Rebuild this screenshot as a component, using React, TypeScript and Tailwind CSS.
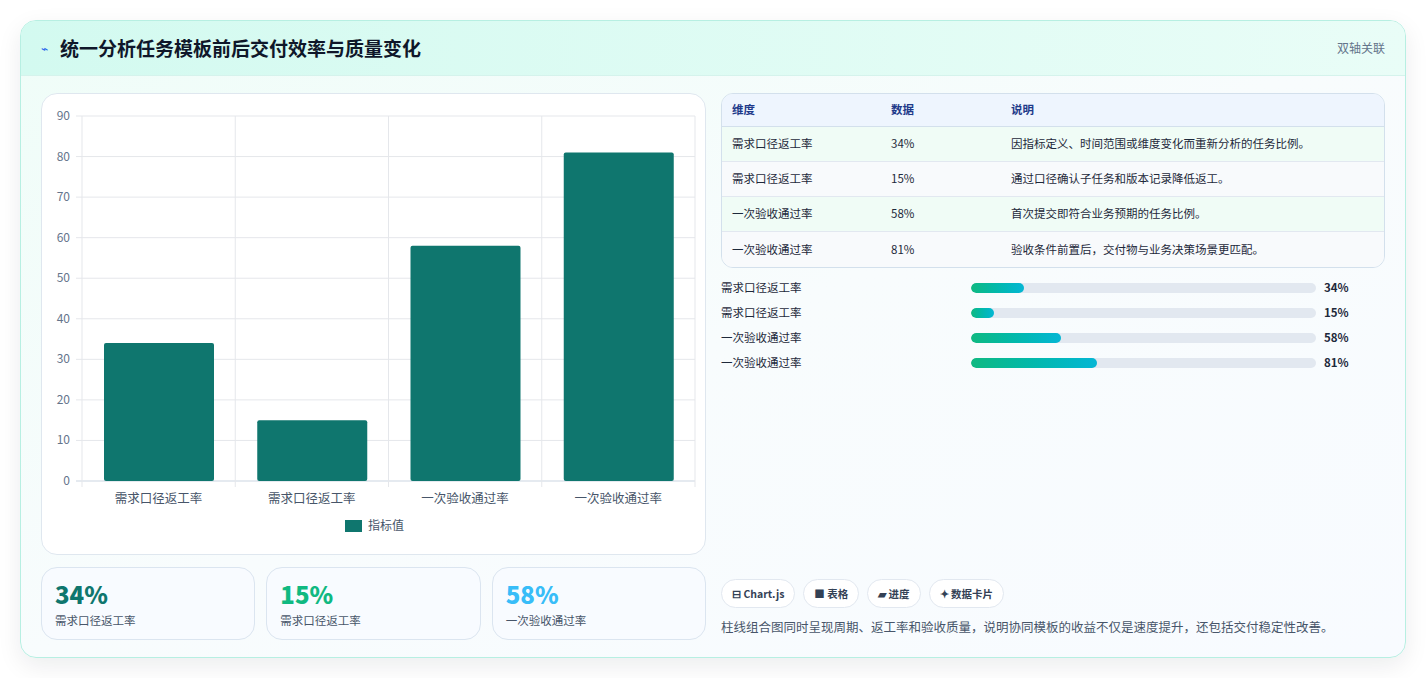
import React from "react";

const rows = [
  { name: "需求口径返工率", v: 34, note: "因指标定义、时间范围或维度变化而重新分析的任务比例。" },
  { name: "需求口径返工率", v: 15, note: "通过口径确认子任务和版本记录降低返工。" },
  { name: "一次验收通过率", v: 58, note: "首次提交即符合业务预期的任务比例。" },
  { name: "一次验收通过率", v: 81, note: "验收条件前置后，交付物与业务决策场景更匹配。" },
];

function Chart() {
  const x0 = 40, x1 = 653, yTop = 22, y0 = 387;
  const step = (y0 - yTop) / 9;
  const cw = (x1 - x0) / 4;
  return (
    <svg width="665" height="461" className="block">
      {Array.from({ length: 10 }, (_, i) => {
        const y = y0 - i * step;
        return (
          <g key={i}>
            <line x1={x0 - 6} x2={x1} y1={y} y2={y} stroke={i === 0 ? "#cbd5e1" : "#e5e7eb"} />
            <text x={x0 - 12} y={y + 4} textAnchor="end" fontSize="12" fill="#64748b">{i * 10}</text>
          </g>
        );
      })}
      {Array.from({ length: 5 }, (_, i) => (
        <line key={i} x1={x0 + i * cw} x2={x0 + i * cw} y1={yTop} y2={y0 + 6} stroke="#e5e7eb" />
      ))}
      {rows.map((r, i) => {
        const h = r.v * step / 10;
        const bx = x0 + i * cw + 22;
        return (
          <g key={i}>
            <rect x={bx} y={y0 - h} width={110} height={h} rx="2" fill="#0f766e" />
            <text x={x0 + i * cw + cw / 2} y={409} textAnchor="middle" fontSize="12.5" fill="#475569">{r.name}</text>
          </g>
        );
      })}
      <rect x="303" y="426" width="17" height="12" fill="#0f766e" />
      <text x="326" y="436" fontSize="12" fill="#475569">指标值</text>
    </svg>
  );
}

export default function App() {
  return (
    <div className="w-[1426px] h-[678px] bg-white p-5 pt-5" style={{ fontFamily: '"Noto Sans CJK SC", "Noto Sans", sans-serif' }}>
      <div className="rounded-2xl border border-[#b7efe2] bg-gradient-to-br from-[#effdf8] via-[#f8fcfd] to-[#f8fbff] shadow-[0_8px_24px_rgba(15,23,42,0.08)] overflow-hidden h-[638px] flex flex-col">
        <div className="h-[55px] flex items-center justify-between px-5 bg-gradient-to-r from-[#d3faf0] to-[#e9fdf7] border-b border-[#d5f3ec]">
          <div className="flex items-center gap-3">
            <span className="text-[#2563eb] text-xs">⌁</span>
            <h1 className="text-[19px] font-bold text-[#0f172a]">统一分析任务模板前后交付效率与质量变化</h1>
          </div>
          <span className="text-[12px] text-[#64748b]">双轴关联</span>
        </div>
        <div className="flex gap-[15px] px-5 pt-[17px] flex-1">
          <div className="w-[665px] flex flex-col gap-3">
            <div className="h-[462px] rounded-2xl border border-[#dfe7ef] bg-white">
              <Chart />
            </div>
            <div className="grid grid-cols-3 gap-[11px]">
              {[["34%", "text-[#0f766e]"], ["15%", "text-[#10b981]"], ["58%", "text-[#38bdf8]"]].map(([v, c], i) => (
                <div key={i} className="h-[73px] rounded-2xl border border-[#dbe5f0] bg-[#f8fbff] px-[13px] pt-[10px]">
                  <div className={`text-[24px] font-extrabold leading-8 ${c}`}>{v}</div>
                  <div className="text-[11.5px] text-[#475569] mt-[2px]">{rows[i].name}</div>
                </div>
              ))}
            </div>
          </div>
          <div className="flex-1 flex flex-col">
            <div className="rounded-xl border border-[#d3e0ec] overflow-hidden text-[11.5px]">
              <div className="grid grid-cols-[159px_120px_1fr] h-[33px] items-center bg-[#eef5fe] border-b border-[#d3e0ec] px-[10px] font-semibold text-[#1e3a8a]">
                <span>维度</span><span>数据</span><span>说明</span>
              </div>
              {rows.map((r, i) => (
                <div key={i} className={`grid grid-cols-[159px_120px_1fr] h-[35px] items-center px-[10px] text-[#1e293b] ${i < 3 ? "border-b border-[#e2e8f0]" : ""} ${i % 2 === 0 ? "bg-[#f0fcf6]" : "bg-[#f8fafc]"}`}>
                  <span>{r.name}</span><span>{r.v}%</span><span>{r.note}</span>
                </div>
              ))}
            </div>
            <div className="flex flex-col gap-[11px] mt-[13px]">
              {rows.map((r, i) => (
                <div key={i} className="flex items-center h-[14px] text-[11.5px]">
                  <span className="w-[250px] text-[#1e293b]">{r.name}</span>
                  <div className="w-[345px] h-[10px] rounded-full bg-[#e2e8f0] overflow-hidden">
                    <div className="h-full rounded-full bg-gradient-to-r from-[#10b981] to-[#06b6d4]" style={{ width: `${r.v * 0.45}%` }} />
                  </div>
                  <span className="ml-2 font-bold text-[#1e293b]">{r.v}%</span>
                </div>
              ))}
            </div>
            <div className="mt-auto mb-[20px]">
              <div className="flex gap-2 text-[10.5px] font-semibold text-[#334155]">
                {["⊟ Chart.js", "■ 表格", "▰ 进度", "✦ 数据卡片"].map((t) => (
                  <span key={t} className="h-[29px] px-[10px] flex items-center rounded-full border border-[#e2e8f0] bg-white">{t}</span>
                ))}
              </div>
              <p className="mt-[10px] text-[12.5px] text-[#475569]">柱线组合图同时呈现周期、返工率和验收质量，说明协同模板的收益不仅是速度提升，还包括交付稳定性改善。</p>
            </div>
          </div>
        </div>
      </div>
    </div>
  );
}
